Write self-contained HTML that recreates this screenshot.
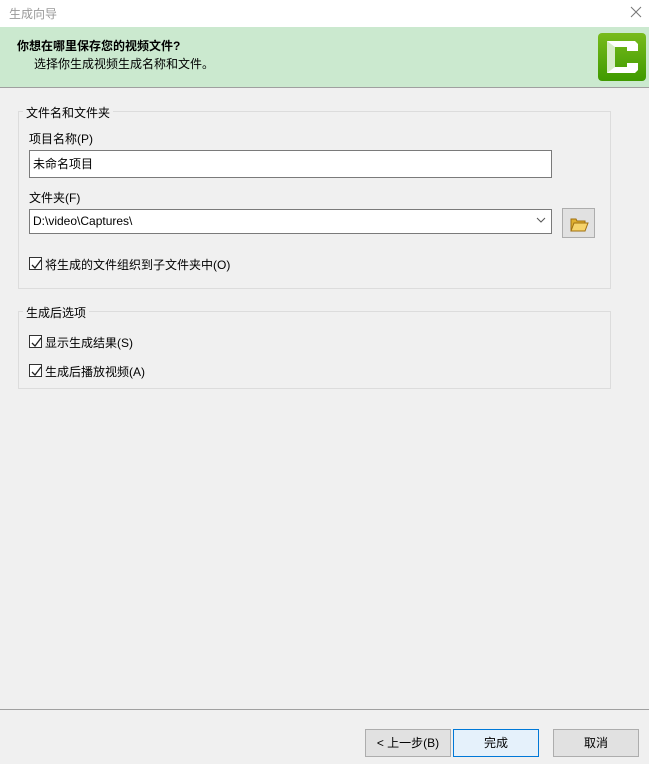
<!DOCTYPE html>
<html><head><meta charset="utf-8"><style>
*{margin:0;padding:0;box-sizing:border-box}
body{width:649px;height:764px;background:#f0f0f0;font-family:"Liberation Sans","Noto Sans CJK SC",sans-serif;font-size:12px;color:#000;position:relative;overflow:hidden}
.a{position:absolute}
.cb{position:absolute;width:13px;height:13px;border:1px solid #333;background:#fff}
.cb svg{position:absolute;left:1px;top:1px}
.btn{position:absolute;top:729px;height:28px;border:1px solid #adadad;background:#e1e1e1;text-align:center;line-height:26px;font-size:12px}
</style></head><body>
<div class="a" style="left:0;top:0;width:649px;height:27px;background:#fff"></div>
<div class="a" style="left:9px;top:5px;color:#999">生成向导</div>
<svg class="a" style="left:630px;top:6px" width="12" height="12"><path d="M1 1l10 10M11 1L1 11" stroke="#777" stroke-width="1"/></svg>
<div class="a" style="left:0;top:27px;width:649px;height:61px;background:#cbe9cf;border-bottom:1px solid #a0a0a0"></div>
<div class="a" style="left:17px;top:37px;font-weight:bold">你想在哪里保存您的视频文件?</div>
<div class="a" style="left:34px;top:55px">选择你生成视频生成名称和文件。</div>
<div class="a" style="left:598px;top:33px;width:48px;height:48px;border-radius:4px;background:linear-gradient(#78bb1c,#3f9a00)">
<svg width="48" height="48"><polygon points="9,8 37,8 40,11 40,18 29,18 29,14 17,14 17,34 29,34 29,30 40,30 40,37 37,40 9,40" fill="#fff"/><polygon points="9,8 17,14 17,34 9,40" fill="#d7ecc8"/></svg></div>
<div class="a" style="left:18px;top:111px;width:593px;height:178px;border:1px solid #dcdcdc"></div>
<div class="a" style="left:23px;top:104px;background:#f0f0f0;padding:0 3px">文件名和文件夹</div>
<div class="a" style="left:29px;top:130px">项目名称(P)</div>
<div class="a" style="left:29px;top:150px;width:523px;height:28px;background:#fff;border:1px solid #7a7a7a;padding:4px 3px">未命名项目</div>
<div class="a" style="left:29px;top:189px">文件夹(F)</div>
<div class="a" style="left:29px;top:209px;width:523px;height:25px;background:#fff;border:1px solid #7a7a7a;padding:4px 3px">D:\video\Captures\</div>
<svg class="a" style="left:536px;top:217px" width="10" height="6"><path d="M1 1l4 4 4-4" stroke="#555" fill="none"/></svg>
<div class="a" style="left:562px;top:208px;width:33px;height:30px;border:1px solid #adadad;background:#e1e1e1">
<svg width="31" height="28"><path d="M8 10h5l1 2h8v10H8z" fill="#e0b030" stroke="#a07010"/><path d="M8 22l3-8h14l-3 8z" fill="#f6d36a" stroke="#a07010"/></svg></div>
<div class="cb" style="left:29px;top:257px"><svg width="11" height="11"><path d="M1 6l3 3 6-8" stroke="#222" fill="none" stroke-width="1.3"/></svg></div>
<div class="a" style="left:45px;top:256px">将生成的文件组织到子文件夹中(O)</div>
<div class="a" style="left:18px;top:311px;width:593px;height:78px;border:1px solid #dcdcdc"></div>
<div class="a" style="left:23px;top:304px;background:#f0f0f0;padding:0 3px">生成后选项</div>
<div class="cb" style="left:29px;top:335px"><svg width="11" height="11"><path d="M1 6l3 3 6-8" stroke="#222" fill="none" stroke-width="1.3"/></svg></div>
<div class="a" style="left:45px;top:334px">显示生成结果(S)</div>
<div class="cb" style="left:29px;top:364px"><svg width="11" height="11"><path d="M1 6l3 3 6-8" stroke="#222" fill="none" stroke-width="1.3"/></svg></div>
<div class="a" style="left:45px;top:363px">生成后播放视频(A)</div>
<div class="a" style="left:0;top:709px;width:649px;height:1px;background:#a0a0a0"></div>
<div class="btn" style="left:365px;width:86px">&lt; 上一步(B)</div>
<div class="btn" style="left:453px;width:86px;background:#e5f1fb;border:1px solid #0078d7">完成</div>
<div class="btn" style="left:553px;width:86px">取消</div>
</body></html>
